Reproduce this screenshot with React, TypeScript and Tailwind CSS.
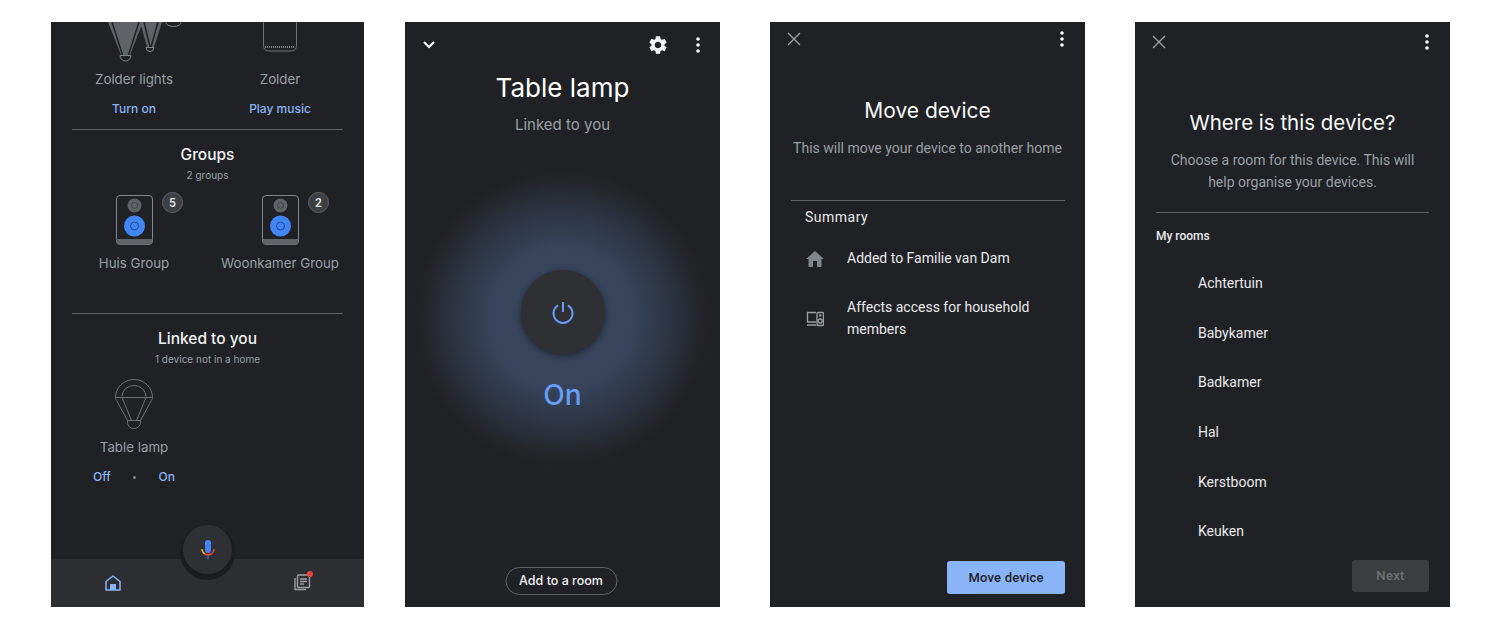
const sans = 'font-[family-name:Roboto,sans-serif]';
const head = 'font-[family-name:Inter,sans-serif]';

function CloseIcon() {
    return (
        <svg viewBox="0 0 14 14" className="h-[14px] w-[14px]" fill="none" stroke="#9aa0a6" strokeWidth="1.4">
            <path d="M1 1l12 12M13 1L1 13" />
        </svg>
    );
}

function DotsIcon() {
    return (
        <svg viewBox="0 0 4 16" className="h-[16px] w-[4px]" fill="#fff">
            <circle cx="2" cy="2" r="1.8" />
            <circle cx="2" cy="8" r="1.8" />
            <circle cx="2" cy="14" r="1.8" />
        </svg>
    );
}

function BulbIcon() {
    return (
        <svg viewBox="0 0 38 50" className="h-[50px] w-[38px]" fill="none" stroke="#6f7377" strokeWidth="1">
            <path d="M12.5 41.5L1.6 21.5C0.8 20 .5 19 .5 18.5a18.5 18 0 0 1 37 0c0 .5-.3 1.5-1.100 3L25.500 41.500" />
            <path d="M7 17.500a12 11 0 0 1 24 0" />
            <path d="M.5 18.500h37M7 18.500l9.500 23M31 18.500l-9.500 23" />
            <path d="M12.500 41.500h13v2a6.500 6 0 0 1-13 0z" />
        </svg>
    );
}

function SpeakerIcon() {
    return (
        <svg viewBox="0 0 37 50" className="h-[50px] w-[37px]">
            <path d="M4 .5h29a3.500 3.500 0 0 1 3.500 3.500v42a3.500 3.500 0 0 1-3.500 3.500H4A3.500 3.500 0 0 1 .5 46V4A3.500 3.500 0 0 1 4 .5z" fill="none" stroke="#80868b" />
            <path d="M.5 44h36v2.500a3 3 0 0 1-3 3h-30a3 3 0 0 1-3-3z" fill="#5f6368" />
            <circle cx="18.500" cy="10.500" r="7" fill="#5f6368" />
            <circle cx="18.500" cy="10.500" r="3" fill="none" stroke="#3c4043" strokeWidth="1" />
            <circle cx="18.500" cy="31" r="10.500" fill="#4285f4" />
            <circle cx="18.500" cy="31" r="4" fill="none" stroke="#1a4b9c" strokeWidth="1" />
        </svg>
    );
}

function GroupTile({ name, count }: { name: string; count: number }) {
    return (
        <div className="relative flex flex-col items-center">
            <SpeakerIcon />
            <span className="absolute left-[101px] top-[-3px] flex h-[21px] w-[21px] items-center justify-center rounded-full border border-[#5f6368] bg-[#3c4043] text-[12px] font-medium text-[#e8eaed]">
                {count}
            </span>
            <p className={`${head} mt-[8px] text-[13.300px] leading-[20px] text-[#9aa0a6]`}>{name}</p>
        </div>
    );
}

function HomePanel() {
    return (
        <section className="relative flex h-[585px] w-[313px] shrink-0 flex-col bg-[#202124]">
            {/* Devices cut off by the scroll position */}
            <div className="grid h-[47px] grid-cols-[146px_146px] overflow-hidden pl-[10px]">
                <div className="flex justify-center">
                    <svg viewBox="0 0 82 41" className="ml-[14px] h-[41px] w-[82px] shrink-0" fill="none">
                        <path d="M8 0h35L30 33H21z" fill="#5f6368" />
                        <path d="M12 0l10.500 33M39 0L28.500 33" stroke="#202124" strokeWidth="1.500" />
                        <path d="M20 33.500h11a5.500 5.500 0 0 1-11 0z" stroke="#80868b" />
                        <path d="M40 0h22L54 25h-7z" fill="#5f6368" />
                        <path d="M44 0l6 25M58 0l-7 25" stroke="#202124" strokeWidth="1.500" />
                        <path d="M46 25.500h8a4 4 0 0 1-8 0z" stroke="#80868b" />
                        <path d="M66 .5a7.500 4 0 0 0 15 0" stroke="#80868b" />
                    </svg>
                </div>
                <div className="flex justify-center">
                    <svg viewBox="0 0 34 30" className="h-[30px] w-[34px] shrink-0">
                        <path d="M.5 0v24a5 5 0 0 0 5 5h23a5 5 0 0 0 5-5V0" fill="none" stroke="#6f7377" />
                        <path d="M2 25h30" stroke="#80868b" strokeWidth="2" strokeDasharray="1 1" />
                    </svg>
                </div>
            </div>
            <div className={`${head} grid grid-cols-[146px_146px] pl-[10px] text-center`}>
                <p className="text-[13.300px] leading-[20px] text-[#9aa0a6]">Zolder lights</p>
                <p className="text-[13.300px] leading-[20px] text-[#9aa0a6]">Zolder</p>
                <p className="mt-[10px] text-[12px] font-medium leading-[20px] text-[#8ab4f8]">Turn on</p>
                <p className="mt-[10px] text-[12px] font-medium leading-[20px] text-[#8ab4f8]">Play music</p>
            </div>
            <div className="mx-[21px] mt-[10px] h-px bg-[#5f6368]" />

            <h2 className={`${head} mt-[15px] text-center text-[15.500px] font-medium leading-[20px] text-[#f1f3f4]`}>Groups</h2>
            <p className={`${head} mt-[3px] text-center text-[10px] leading-[14px] text-[#9aa0a6]`}>2 groups</p>
            <div className="mt-[13px] grid grid-cols-[146px_146px] pl-[10px]">
                <GroupTile name="Huis Group" count={5} />
                <GroupTile name="Woonkamer Group" count={2} />
            </div>
            <div className="mx-[21px] mt-[40px] h-px bg-[#5f6368]" />

            <h2 className={`${head} mt-[15px] text-center text-[15.500px] font-medium leading-[20px] text-[#f1f3f4]`}>Linked to you</h2>
            <p className={`${head} mt-[3px] text-center text-[10px] leading-[14px] text-[#9aa0a6]`}>1 device not in a home</p>
            <div className="ml-[10px] mt-[13px] flex w-[146px] flex-col items-center">
                <BulbIcon />
                <p className={`${head} mt-[8px] text-[13.300px] leading-[20px] text-[#9aa0a6]`}>Table lamp</p>
                <div className={`${head} mt-[10px] flex w-[82px] items-center justify-between text-[12px] font-medium leading-[20px] text-[#8ab4f8]`}>
                    <span>Off</span>
                    <span className="h-[3px] w-[3px] rounded-full bg-[#80868b]" />
                    <span>On</span>
                </div>
            </div>

            {/* Bottom nav */}
            <nav className="mt-auto flex h-[48px] items-center justify-between bg-[#2d2e31] pl-[54px] pr-[53px]">
                <svg viewBox="0 0 16 16" className="h-[16px] w-[16px]" fill="none" stroke="#8ab4f8" strokeWidth="1.500" strokeLinejoin="round">
                    <path d="M1 15V6.500L8 1l7 5.500V15z" />
                    <rect x="5" y="9" width="6" height="6" fill="#8ab4f8" stroke="none" />
                </svg>
                <div className="relative h-[18px] w-[18px]">
                    <svg viewBox="0 0 18 18" className="h-[18px] w-[18px]" fill="none" stroke="#9aa0a6" strokeWidth="1.400">
                        <rect x="4.500" y="1" width="12" height="12.500" rx="1" />
                        <path d="M2 4v11.500h11M7 5h7M7 7.500h7M7 10h4" />
                    </svg>
                    <span className="absolute right-[-2px] top-[-3px] h-[6px] w-[6px] rounded-full bg-[#ea4335]" />
                </div>
            </nav>

            {/* Mic button sits over the nav */}
            <div className="absolute left-[132px] top-[503px] flex h-[49px] w-[49px] items-center justify-center rounded-full bg-[#2f3033] shadow-[0_3px_0_3px_#1b1c1f]">
                <svg viewBox="0 0 16 20" className="h-[20px] w-[16px]" fill="none">
                    <rect x="5" y="0" width="6" height="13" rx="3" fill="#4285f4" />
                    <path d="M2 9a6 6 0 0 0 3 5" stroke="#fbbc04" strokeWidth="1.500" />
                    <path d="M5 14a6 6 0 0 0 6 0M11 14a6 6 0 0 0 3-5" stroke="#ea4335" strokeWidth="1.500" />
                    <path d="M8 15v4" stroke="#4285f4" strokeWidth="1" />
                </svg>
            </div>
        </section>
    );
}

function LampPanel() {
    return (
        <section className="relative flex h-[585px] w-[315px] shrink-0 flex-col items-center overflow-hidden bg-[#202124]">
            {/* Glow behind the power button */}
            <div className="absolute left-[7px] top-[146px] h-[300px] w-[300px] rounded-full bg-[radial-gradient(circle_closest-side,#384559_0%,#36435a_48%,#2c3442_73%,#24262b_90%,#202124_100%)]" />

            <div className="relative flex h-[46px] w-full items-center justify-between pl-[18px] pr-[20px]">
                <svg viewBox="0 0 12 8" className="h-[8px] w-[12px]" fill="none" stroke="#fff" strokeWidth="2">
                    <path d="M1 1l5 5 5-5" />
                </svg>
                <div className="flex items-center gap-[27px]">
                    <svg viewBox="0 0 24 24" className="h-[22px] w-[22px]" fill="#f1f3f4">
                        <path d="M19.140 12.940c.04-.3.06-.61.06-.94 0-.32-.02-.64-.07-.94l2.030-1.580a.49.49 0 0 0 .12-.61l-1.920-3.320a.488.488 0 0 0-.59-.22l-2.390.96c-.5-.38-1.030-.7-1.620-.94l-.36-2.540a.484.484 0 0 0-.48-.41h-3.840c-.24 0-.43.17-.47.41l-.36 2.540c-.59.24-1.130.57-1.620.94l-2.390-.96c-.22-.08-.47 0-.59.22L2.740 8.870c-.12.21-.08.47.12.61l2.030 1.580c-.05.3-.09.63-.09.94s.02.64.07.94l-2.030 1.580a.49.49 0 0 0-.12.61l1.920 3.320c.12.22.37.29.59.22l2.390-.96c.5.38 1.030.7 1.620.94l.36 2.540c.05.24.24.41.48.41h3.840c.24 0 .44-.17.47-.41l.36-2.540c.59-.24 1.130-.56 1.620-.94l2.390.96c.22.08.47 0 .59-.22l1.920-3.320c.12-.22.07-.47-.12-.61l-2.010-1.580zM12 15.600c-1.980 0-3.600-1.620-3.600-3.600s1.620-3.600 3.600-3.600 3.600 1.620 3.600 3.600-1.620 3.600-3.600 3.600z" />
                    </svg>
                    <DotsIcon />
                </div>
            </div>

            <h1 className={`${head} relative mt-[1px] text-[26px] leading-[38px] text-white`}>Table lamp</h1>
            <p className={`${head} relative mt-[7px] text-[15px] leading-[22px] text-[#9aa0a6]`}>Linked to you</p>

            <div className="relative mt-[134px] flex h-[84px] w-[84px] items-center justify-center rounded-full bg-[#2f3033] shadow-[0_2px_6px_rgba(0,0,0,0.45)]">
                <svg viewBox="0 0 24 24" className="h-[24px] w-[24px]" fill="none" stroke="#669df6" strokeWidth="2">
                    <path d="M12 2v10" />
                    <path d="M7 5.300a9.500 9.500 0 1 0 10 0" />
                </svg>
            </div>
            <p className={`${head} relative mt-[23px] text-[28px] font-medium leading-[36px] text-[#669df6]`}>On</p>

            <button className={`${head} relative mb-[12px] mt-auto flex h-[28px] w-[112px] -translate-x-[1.500px] items-center justify-center rounded-full border border-[#5f6368] text-[12.500px] font-medium text-[#f1f3f4]`}>
                Add to a room
            </button>
        </section>
    );
}

function MovePanel() {
    return (
        <section className={`${sans} flex h-[585px] w-[315px] shrink-0 flex-col bg-[#202124]`}>
            <div className="flex h-[34px] items-center justify-between pl-[17px] pr-[21px]">
                <CloseIcon />
                <DotsIcon />
            </div>
            <h1 className={`${head} mt-[38px] text-center text-[21px] leading-[34px] text-[#f8f9fa]`}>Move device</h1>
            <p className="mt-[10px] text-center text-[14px] leading-[20px] text-[#9aa0a6]">This will move your device to another home</p>
            <div className="ml-[21px] mr-[20px] mt-[42px] h-px bg-[#5f6368]" />
            <p className="ml-[35px] mt-[6px] text-[14px] leading-[20px] tracking-[0.5px] text-[#e8eaed]">Summary</p>

            <div className="ml-[36px] mt-[21px] flex items-center gap-[23px]">
                <svg viewBox="0 0 18 16" className="h-[16px] w-[18px]" fill="#80868b">
                    <path d="M7 16v-6h4v6h4.500V8H18L9 0 0 8h2.500v8z" />
                </svg>
                <p className="text-[14px] leading-[21px] text-[#e8eaed]">Added to Familie van Dam</p>
            </div>
            <div className="ml-[36px] mt-[28px] flex items-center gap-[23px]">
                <svg viewBox="0 0 18 16" className="h-[16px] w-[18px]" fill="none" stroke="#9aa0a6" strokeWidth="1.300">
                    <path d="M10 1.500H1.500v9.500H10M1 14h9" />
                    <rect x="11" y="1.500" width="6.500" height="13" rx="1" />
                    <circle cx="14.200" cy="10" r="2" />
                    <circle cx="14.200" cy="4.500" r=".6" />
                </svg>
                <p className="w-[190px] text-[14px] leading-[21.500px] text-[#e8eaed]">Affects access for household members</p>
            </div>

            <button className="mb-[13px] mr-[20px] mt-auto h-[33px] w-[118px] self-end rounded-[3px] bg-[#8ab4f8] text-[13px] font-medium tracking-[0.2px] text-[#202124]">
                Move device
            </button>
        </section>
    );
}

const rooms = ['Achtertuin', 'Babykamer', 'Badkamer', 'Hal', 'Kerstboom', 'Keuken'];

function RoomPanel() {
    return (
        <section className={`${sans} flex h-[585px] w-[315px] shrink-0 flex-col bg-[#202124]`}>
            <div className="flex h-[40px] items-center justify-between pl-[17px] pr-[21px]">
                <CloseIcon />
                <DotsIcon />
            </div>
            <h1 className={`${head} mt-[44px] text-center text-[20.500px] leading-[34px] text-[#f8f9fa]`}>Where is this device?</h1>
            <p className="mt-[9px] text-center text-[14px] leading-[22px] text-[#9aa0a6]">
                Choose a room for this device. This will
                <br />
                help organise your devices.
            </p>
            <div className="ml-[21px] mr-[21px] mt-[19px] h-px bg-[#5f6368]" />
            <p className="ml-[21px] mt-[15px] text-[12px] font-medium leading-[16px] text-[#e8eaed]">My rooms</p>
            <ul className="ml-[63px] mt-[29px] flex flex-col gap-[29.700px] text-[14px] leading-[20px] text-[#e8eaed]">
                {rooms.map((r) => (
                    <li key={r}>{r}</li>
                ))}
            </ul>
            <button className="mb-[15px] mr-[21px] mt-auto h-[32px] w-[77px] self-end rounded-[3px] bg-[#3c3d40] text-[13px] font-medium tracking-[0.3px] text-[#6f7073]">
                Next
            </button>
        </section>
    );
}

export default function App() {
    return (
        <div className={`${sans} flex h-[628px] w-[1500px] bg-white pl-[51px] pt-[22px]`}>
            <HomePanel />
            <div className="ml-[41px] mr-[50px]">
                <LampPanel />
            </div>
            <MovePanel />
            <div className="ml-[50px]">
                <RoomPanel />
            </div>
        </div>
    );
}
